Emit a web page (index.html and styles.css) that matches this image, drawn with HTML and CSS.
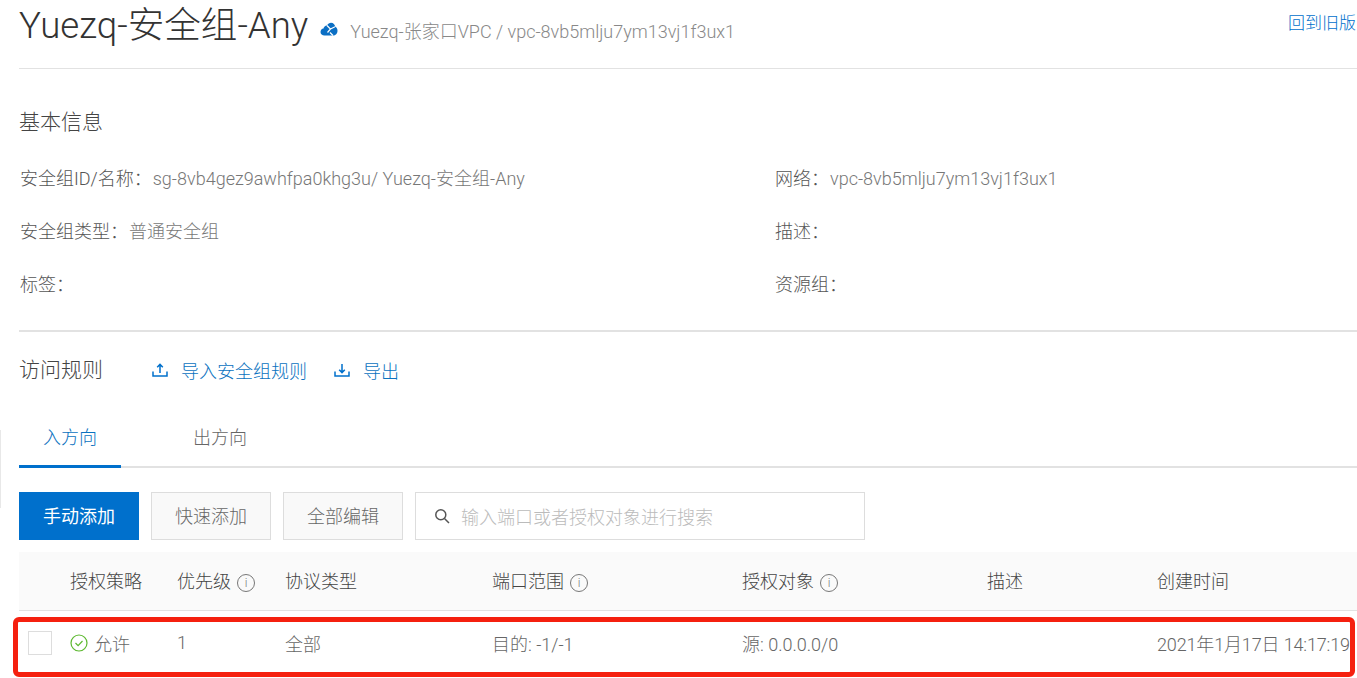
FILE: index.html
```html
<!DOCTYPE html>
<html>
    <head>
        <title>Yuezq-安全组-Any</title>
        <link rel="stylesheet" href="styles.css">
    </head>
    <body>
        <div class="edge"></div>
        <div class="header">
            <h1 class="title">Yuezq-安全组-Any</h1>
            <svg class="cloud" width="18" height="14" viewBox="0 0 18 14">
                <path fill="#0b6fc4" d="M4.500 13.500C2.200 13.500.5 12 .5 10c0-1.800 1.300-3.200 3-3.400C3.700 4.700 5.300 3.300 7 3.400 8 1.700 9.500.8 11 .8c2.300 0 4 1.700 4.200 4 1.400.6 2.300 2.100 2.300 3.900 0 2.700-1.900 4.800-4.500 4.800z"/>
                <path fill="none" stroke="#fff" stroke-width="1.200" d="M7 3.500l3.500 3.500-3 3.500M10.500 7l4.500-2.200M10 10.500l3 3"/>
            </svg>
            <span class="vpc">Yuezq-张家口VPC / vpc-8vb5mlju7ym13vj1f3ux1</span>
            <a class="old-link">回到旧版</a>
        </div>

        <h2 class="section-title basic-title">基本信息</h2>
        <div class="info">
            <div class="info-item">安全组ID/名称：<span class="info-value">sg-8vb4gez9awhfpa0khg3u/ Yuezq-安全组-Any</span></div>
            <div class="info-item">网络：<span class="info-value">vpc-8vb5mlju7ym13vj1f3ux1</span></div>
            <div class="info-item">安全组类型：<span class="info-value">普通安全组</span></div>
            <div class="info-item">描述：</div>
            <div class="info-item">标签：</div>
            <div class="info-item">资源组：</div>
        </div>

        <div class="rules-head">
            <h2 class="section-title">访问规则</h2>
            <a class="action import">
                <svg width="16" height="16" viewBox="0 0 16 16" fill="none" stroke="#0070cc" stroke-width="1.500">
                    <path d="M1 9.500v4.500h14V9.500M8 11V2.500M5.200 5.200L8 2.400l2.800 2.800"/>
                </svg>
                导入安全组规则
            </a>
            <a class="action">
                <svg width="16" height="16" viewBox="0 0 16 16" fill="none" stroke="#0070cc" stroke-width="1.500">
                    <path d="M1 9.500v4.500h14V9.500M8 2v8.500M5.200 7.800L8 10.600l2.800-2.800"/>
                </svg>
                导出
            </a>
        </div>

        <div class="tabs">
            <div class="tab active">入方向</div>
            <div class="tab">出方向</div>
        </div>

        <div class="toolbar">
            <div class="btn primary">手动添加</div>
            <div class="btn">快速添加</div>
            <div class="btn">全部编辑</div>
            <div class="search">
                <svg width="16" height="16" viewBox="0 0 16 16" fill="none" stroke="#555" stroke-width="1.500">
                    <circle cx="6.800" cy="6.800" r="5"/>
                    <path d="M10.500 10.500l4.500 4.500"/>
                </svg>
                <span>输入端口或者授权对象进行搜索</span>
            </div>
        </div>

        <div class="table">
            <div class="row head">
                <div></div>
                <div>授权策略</div>
                <div>优先级<i class="tip">i</i></div>
                <div>协议类型</div>
                <div>端口范围<i class="tip">i</i></div>
                <div>授权对象<i class="tip">i</i></div>
                <div>描述</div>
                <div>创建时间</div>
            </div>
            <div class="row body">
                <div><span class="check"></span></div>
                <div class="allow">
                    <svg width="18" height="18" viewBox="0 0 18 18" fill="none" stroke="#5cb82f" stroke-width="1.200">
                        <circle cx="9" cy="9" r="8"/>
                        <path d="M5.500 9l2.600 2.600 4.400-4.600"/>
                    </svg>
                    允许
                </div>
                <div>1</div>
                <div>全部</div>
                <div>目的: -1/-1</div>
                <div>源: 0.0.0.0/0</div>
                <div></div>
                <div class="time">2021年1月17日 14:17:19</div>
            </div>
        </div>
        <div class="highlight"></div>
    </body>
</html>
```

FILE: styles.css
```css
html, body {
    margin: 0;
    height: 678px;
    overflow: hidden;
}
body {
    position: relative;
    padding-left: 19px;
    background: #fff;
    color: #666;
    font-family: Roboto, "Noto Sans CJK SC", sans-serif;
    font-size: 18px;
    font-weight: 300;
}
a {
    color: #0070cc;
}
.edge {
    position: absolute;
    left: 0;
    top: 430px;
    width: 1px;
    height: 78px;
    background: #e8e8e8;
}
.header {
    display: flex;
    align-items: center;
    height: 52px;
    padding-bottom: 16px;
    border-bottom: 1px solid #e2e2e2;
}
.title {
    margin: 0 12px 0 0;
    color: #333;
    font-size: 36.6px;
    font-weight: 300;
    line-height: 52px;
    white-space: nowrap;
}
.cloud {
    margin: 6px 12px 0 0;
}
.vpc {
    margin-top: 8px;
    color: #888;
    white-space: nowrap;
}
.old-link {
    margin: 0 1px 9px auto;
    font-size: 17px;
    white-space: nowrap;
}
.section-title {
    margin: 0;
    color: #444;
    font-size: 21px;
    font-weight: 300;
    line-height: 28px;
}
.basic-title {
    margin-top: 39px;
}
.info {
    display: grid;
    grid-template-columns: 755px 1fr;
    grid-auto-rows: 53px;
    height: 180px;
    margin-top: 16px;
    padding-left: 1px;
    border-bottom: 2px solid #e2e2e2;
    box-sizing: border-box;
}
.info-item {
    color: #555;
    line-height: 53px;
    white-space: nowrap;
}
.info-value {
    margin-left: 1px;
    color: #777;
}
.rules-head {
    display: flex;
    align-items: center;
    height: 28px;
    margin-top: 24px;
}
.action {
    display: flex;
    align-items: center;
    gap: 13px;
    margin-left: 27px;
    margin-bottom: 1px;
    color: #0a72c0;
}
.import {
    margin-left: 49px;
}
.tabs {
    display: flex;
    height: 55px;
    margin-top: 27px;
    border-bottom: 2px solid #e2e2e2;
}
.tab {
    width: 102px;
    height: 55px;
    margin-right: 48px;
    padding-top: 9px;
    box-sizing: border-box;
    color: #666;
    line-height: 36px;
    text-align: center;
}
.active {
    height: 57px;
    margin-bottom: -2px;
    border-bottom: 3px solid #0070cc;
    color: #0a72c0;
}
.toolbar {
    display: flex;
    gap: 12px;
    height: 48px;
    margin-top: 24px;
}
.btn {
    width: 120px;
    box-sizing: border-box;
    border: 1px solid #ddd;
    background: #f9f9f9;
    color: #666;
    line-height: 48px;
    text-align: center;
}
.primary {
    border: 0;
    background: #0070cc;
    color: #fff;
    font-weight: 400;
    line-height: 50px;
}
.search {
    display: flex;
    align-items: center;
    gap: 11px;
    width: 450px;
    padding-left: 18px;
    box-sizing: border-box;
    border: 1px solid #ddd;
    color: #bbb;
}
.table {
    margin-top: 12px;
}
.row {
    display: grid;
    grid-template-columns: 51px 107px 108px 207px 250px 245px 170px 200px;
    align-items: center;
    white-space: nowrap;
}
.head {
    height: 56px;
    padding-bottom: 2px;
    background: #fafafa;
    border-bottom: 1px solid #e2e2e2;
    color: #444;
}
.body {
    height: 63px;
    color: #666;
}
.tip {
    display: inline-block;
    width: 18px;
    height: 18px;
    margin-left: 6px;
    box-sizing: border-box;
    border: 1px solid #777;
    border-radius: 50%;
    color: #777;
    font-size: 12px;
    font-style: normal;
    line-height: 16px;
    text-align: center;
    vertical-align: 1px;
}
.check {
    display: block;
    width: 24px;
    height: 24px;
    margin-left: 9px;
    box-sizing: border-box;
    border: 1px solid #ddd;
}
.allow {
    display: flex;
    align-items: center;
    gap: 6px;
}
.time {
    letter-spacing: -0.15px;
}
.highlight {
    position: absolute;
    left: 13px;
    top: 617px;
    width: 1342px;
    height: 60px;
    box-sizing: border-box;
    border: 5px solid #f5200f;
    border-radius: 6px;
}
```
